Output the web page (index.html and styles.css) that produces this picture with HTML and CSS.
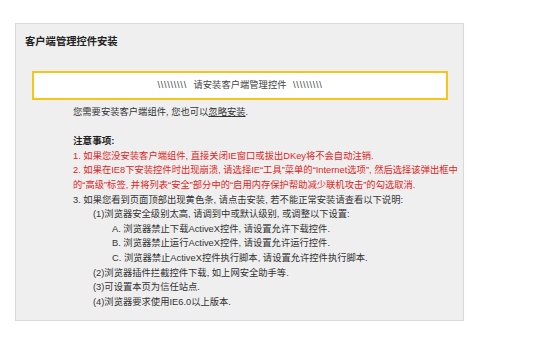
FILE: index.html
```html
<!DOCTYPE html>
<html lang="zh">
<head>
    <meta charset="UTF-8">
    <title>客户端管理控件安装</title>
    <link rel="stylesheet" href="styles.css">
</head>
<body>
    <div class="panel">
        <h2 class="panel-title">客户端管理控件安装</h2>

        <div class="notice">
            <span class="slashes">\\\\\\\\\</span> 请安装客户端管理控件 <span class="slashes">\\\\\\\\\</span>
        </div>

        <div class="content">
            <p class="intro">您需要安装客户端组件, 您也可以<a href="#" class="ignore">忽略安装</a>.</p>

            <h3 class="tips-title">注意事项:</h3>
            <p class="warn">1. 如果您没安装客户端组件, 直接关闭IE窗口或拔出DKey将不会自动注销.</p>
            <p class="warn">2. 如果在IE8下安装控件时出现崩溃, 请选择IE“工具”菜单的“Internet选项”, 然后选择该弹出框中<br>的“高级”标签, 并将列表“安全”部分中的“启用内存保护帮助减少联机攻击”的勾选取消.</p>
            <p>3. 如果您看到页面顶部出现黄色条, 请点击安装, 若不能正常安装请查看以下说明:</p>

            <div class="sub">
                <p>(1)浏览器安全级别太高, 请调到中或默认级别, 或调整以下设置:</p>
                <div class="sub-items">
                    <p>A. 浏览器禁止下载ActiveX控件, 请设置允许下载控件.</p>
                    <p>B. 浏览器禁止运行ActiveX控件, 请设置允许运行控件.</p>
                    <p>C. 浏览器禁止ActiveX控件执行脚本, 请设置允许控件执行脚本.</p>
                </div>
                <p>(2)浏览器插件拦截控件下载, 如上网安全助手等.</p>
                <p>(3)可设置本页为信任站点.</p>
                <p>(4)浏览器要求使用IE6.0以上版本.</p>
            </div>
        </div>
    </div>
</body>
</html>
```

FILE: styles.css
```css
:root {
    --panel-bg: #efefef;
    --panel-border: #d9d9d9;
    --text-color: #333333;
    --warn-color: #e01e1e;
    --notice-border: #f5c518;
}

body {
    margin: 0;
    background: #ffffff;
    font-family: 'Liberation Sans', 'Noto Sans CJK SC', sans-serif;
    font-size: 9.3px;
    line-height: 14.6px;
    color: var(--text-color);
}

p {
    margin: 0;
}

.panel {
    width: 449px;
    box-sizing: border-box;
    margin: 23px 0 0 15px;
    padding-bottom: 11px;
    background: var(--panel-bg);
    border: 1px solid var(--panel-border);
    box-shadow: 0 1px 1px rgba(0, 0, 0, 0.06);
}

.panel-title {
    margin: 0;
    padding: 11px 9px 0;
    font-size: 10.3px;
    line-height: 14px;
    font-weight: bold;
    color: #222222;
}

.notice {
    margin: 22px 15px 0 16px;
    height: 25px;
    line-height: 25px;
    text-align: center;
    background: #ffffff;
    border: 2px solid var(--notice-border);
    color: #444444;
}

.slashes {
    letter-spacing: 0.7px;
    margin: 0 4px;
}

.content {
    margin-top: 5px;
    padding-left: 57px;
}

.intro {
    margin-bottom: 14.6px;
}

.ignore {
    color: var(--text-color);
    text-decoration: underline;
}

.tips-title {
    margin: 0;
    font-size: 9.6px;
    line-height: 14.6px;
    font-weight: bold;
    color: #222222;
}

.warn {
    color: var(--warn-color);
}

.sub {
    padding-left: 20px;
}

.sub-items {
    padding-left: 19px;
}
```
